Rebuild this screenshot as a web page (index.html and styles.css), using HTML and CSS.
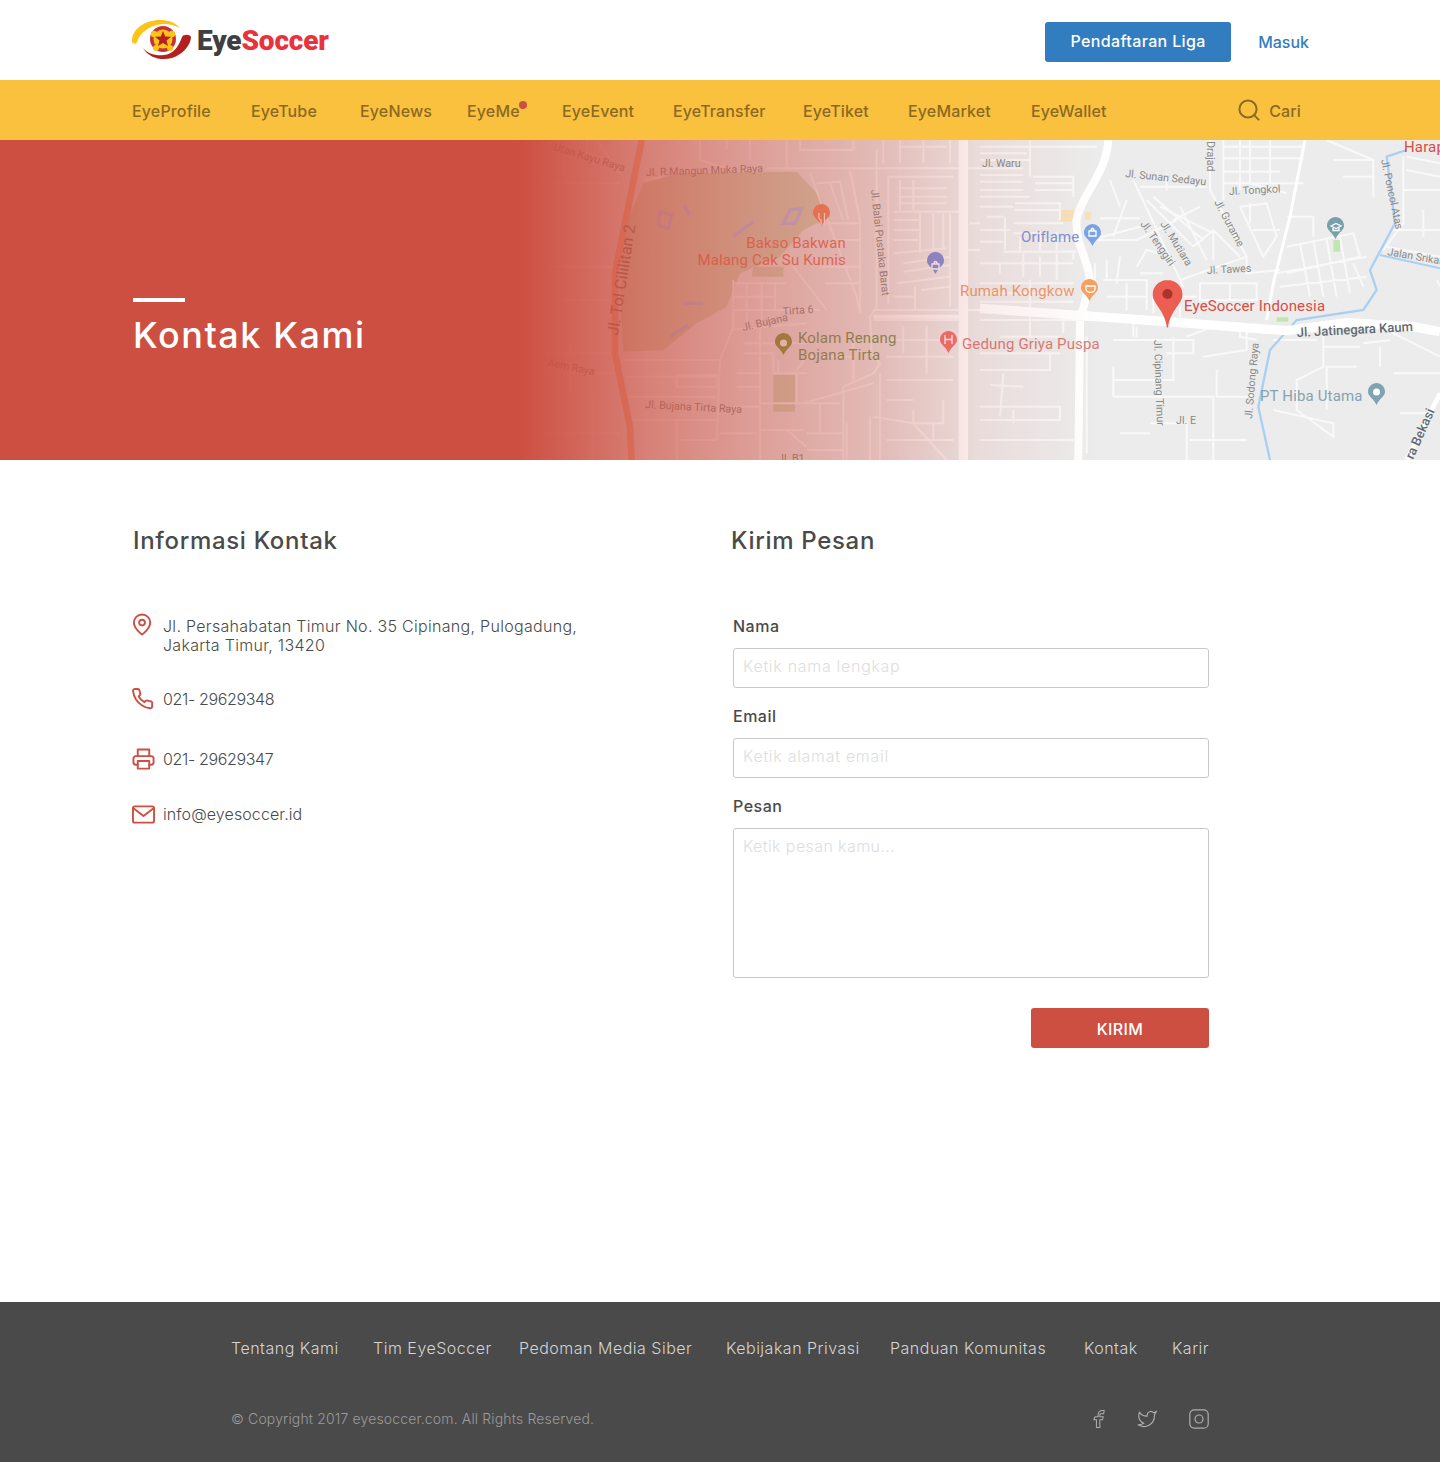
FILE: index.html

```html
<!DOCTYPE html>
<html lang="id">
<head>
    <meta charset="utf-8">
    <title>Kontak Kami - EyeSoccer</title>
    <link rel="stylesheet" href="styles.css">
</head>
<body>

<header class="topbar">
    <a class="logo" href="#">
        <svg class="logo-mark" width="62" height="40" viewBox="0 0 62 40">
            <path d="M1 21C1 9 14 0 29 0c8 0 15 2 20 8C39 3 29 3 20 7 12 11 8 16 6 22c-1 3-5 2-5-1z" fill="#fcc318"/>
            <path d="M12 28c5 6 13 8 21 7 9-1 14-7 18-18 1-3 8-3 9 0 0 8-9 18-19 21-11 3-23 0-29-10z" fill="#b3201f"/>
            <circle cx="32" cy="19" r="14" fill="#fff"/>
            <circle cx="32" cy="19" r="13" fill="#c8313a"/>
            <circle cx="32" cy="19" r="9.500" fill="#fcc318"/>
            <circle cx="23" cy="14" r="3.200" fill="#fcc318"/>
            <circle cx="41" cy="14" r="3.200" fill="#fcc318"/>
            <circle cx="25" cy="28" r="3" fill="#fcc318"/>
            <circle cx="39" cy="28" r="3" fill="#fcc318"/>
            <path d="M32 11l2.200 5.500 5.800.3-4.500 3.700 1.500 5.600-5-3.200-5 3.200 1.500-5.600-4.500-3.700 5.800-.3z" fill="#b3201f"/>
        </svg>
        <span class="logo-text">Eye<span class="logo-red">Soccer</span></span>
    </a>
    <div class="top-actions">
        <a class="btn-daftar" href="#">Pendaftaran Liga</a>
        <a class="link-masuk" href="#">Masuk</a>
    </div>
</header>

<nav class="mainnav">
    <ul class="nav-list">
        <li><a href="#">EyeProfile</a></li>
        <li><a href="#">EyeTube</a></li>
        <li><a href="#">EyeNews</a></li>
        <li><a class="has-dot" href="#">EyeMe</a></li>
        <li><a href="#">EyeEvent</a></li>
        <li><a href="#">EyeTransfer</a></li>
        <li><a href="#">EyeTiket</a></li>
        <li><a href="#">EyeMarket</a></li>
        <li><a href="#">EyeWallet</a></li>
    </ul>
    <a class="nav-search" href="#">
        <svg width="22" height="22" viewBox="0 0 22 22" fill="none" stroke="#8a6a22" stroke-width="2" stroke-linecap="round">
            <circle cx="10" cy="10" r="8.600"/>
            <path d="M16.400 16.400l4.200 4.200"/>
        </svg>
        Cari
    </a>
</nav>

<section class="hero">
    <svg class="hero-map" width="1440" height="320" viewBox="0 0 1440 320">
        <rect width="1440" height="320" fill="#ececec"/>

        <!-- left crop of the map -->
        <g transform="translate(520 0) scale(.33333)">
            <path d="M370 130L480 100 830 95 900 170 930 230 850 270 780 350 660 400 620 500 530 550 430 630 310 635 300 450 320 250z" fill="#d2d8bc"/>
            <path d="M695 410H790V380H700zM760 705H825V815H760z" fill="#d2d8bc"/>
            <path d="M640 290L700 245M490 195L510 225M420 215L455 225 445 265 415 255zM790 250L810 210 845 205 825 250zM490 490L550 490M450 590L505 555" stroke="#b6c6ef" stroke-width="10" fill="none"/>
            <g class="streets">
                <path d="M370 120L430 110M740 85H1380M870 100L1010 470 1020 520M990 90L1020 240V520M820 380L920 510M1070 30V140 500L1050 530 1055 640 1080 670 1060 700 970 740 970 960"/>
                <path d="M890 130L960 125 985 240M930 130L970 240M920 250H1020M950 300H1020M900 380H1020M915 430H1020M640 420V560L600 660 590 900M640 430H800M640 470H760M640 510H900M680 430V560M725 430V560M765 430V510M630 570L860 550M670 610H860M670 640H760M720 550V960M760 640V700H860M775 660V700M830 700V790H860M720 790H960M830 690L860 650 1000 650"/>
                <path d="M310 660H600M320 710H590M470 705H590V740H470zM320 770H590M330 840H590M470 840V960M720 870H850M850 790L1060 730M980 850V960M1050 830V960M1060 830L1180 850 1280 960M1180 810V850H1270V780M1240 850V900M800 870L860 920"/>
                <path d="M1105 110H1300M1105 110V490M1140 120V210M1180 120V210M1140 145H1280M1140 170H1280M1140 190H1280M1120 215H1320M1120 240H1200M1200 220V340M1240 220V330M1270 220V330M1290 220V500M1120 270H1200M1120 300H1195M1120 340 1280 325M1150 370 1290 350M1150 395 1290 375M1130 430 1290 410M1120 470H1180M1205 450 1290 440M1185 440V510M1060 510H1380M1060 540H1330M1380 250H1350M1340 330H1380"/>
                <path d="M800 0V80M840 0V30H1000M1000 0V30M1090 0V70M1140 0V70M1210 0V70M1290 0V70M1140 20H1280M540 0V60L620 85M620 0V30M690 0V60"/>
                <path d="M0 640H300M0 700H300M40 880H300M200 0V60M230 0L300 100M130 20V130M60 130H300M90 380H290M120 480H290M150 600V760M220 760V960M600 880H710M480 900H590M1000 600V730M1080 700V960M1100 600H1300M1100 650H1300M1150 560V640M1220 560V700M1100 720H1300M1100 900H1300M860 880H970M860 930H970M900 790V880M1100 780H1180M650 700H720M650 740H720M640 800H720"/>
            </g>
            <path class="road-big" d="M1330 0V960" stroke-width="28"/>
            <path class="road-big" d="M1060 530H1340" stroke-width="12"/>
            <path d="M365 0L285 400V640L330 860 335 960" stroke="#f5b48a" stroke-width="20" fill="none"/>
        </g>

        <!-- right crop of the map -->
        <g transform="translate(980 0) scale(.33333)">
            <path d="M240 210H285L275 245H240zM315 215H335L330 240H315z" fill="#f6e2b8"/>
            <path d="M1060 300H1080V335H1060zM890 532H925V545H890z" fill="#c2e6b0"/>
            <path class="road-big" d="M385 0C380 100 300 170 290 240 285 320 330 360 330 430L300 540 295 960" stroke-width="24"/>
            <g class="streets">
                <path d="M0 20H350M150 0V110M0 60H150M0 105H130M0 125H130M0 170H150M160 110H280V170M0 200H100M105 190H240V240M75 230V330M100 250H250M0 270H90M0 305H70M70 335H290M180 275V330M120 290V335M230 275V330M280 330V360M0 370H280M60 370V400M130 340V410M180 350V410M230 340V420"/>
                <path d="M0 430H280M0 460H280M150 420V510M370 420H500V510M440 430V510M500 430V510M0 540H460V590M150 530V590M250 540V580M60 590H240M0 640H240M0 690H210V640M30 735 130 740M70 700 60 830M0 800H240V840H0M100 810V850M0 900H280"/>
                <path d="M345 370V430M380 360V420M420 350 410 430M330 300 480 260M360 235H480M440 180 400 290M420 200 390 120M460 120 610 440M480 140H680M560 150V100M540 200 700 280M580 240 660 200M470 380 500 330 540 340M480 400H550M600 420 800 350M660 430H830V480H660zM750 430V480M600 470H650M640 320 700 270 780 350M700 360V270M780 200 860 190 890 290 850 350 780 200M810 190V250"/>
                <path d="M690 0V150L800 350V400L900 390M730 0V180M780 0V150M730 20H970M730 55H970M730 95H900M730 130H970M810 0V130M870 0V130M920 160L810 130M820 270H900M920 230H1000V290M920 320L1120 280 1140 350 920 400M960 310L990 470M1000 300L1030 470M1040 300L1070 470M1080 290 1110 460M1120 370 1150 440M890 400 1160 350M900 440 1160 410"/>
                <path d="M320 590V940M400 600H640V640H560M470 560V590M580 590V720H400M670 650 800 630V570M710 690V770H820M400 770H700V960M400 680V770M510 850H620V960M830 600L780 590V560M1030 560V680L950 720V810L1060 890 1060 850 880 810M1130 680H1040V740M1200 620V680M1040 740V810"/>
                <path d="M1040 0L1180 60 1180 170M1060 60H1180M1090 110H1180M1280 50 1380 70M1280 90 1380 110M1270 150H1380M1270 50V250L1210 330M1240 270H1380M1330 210V290M1220 320 1380 350M1370 420 1380 440M1200 560 1380 650M1150 610 1230 600"/>
                <path d="M0 40H140M0 85H130M0 150H130M165 130H280M165 150H280M105 210H240M20 230H70M100 280H170M185 300H280M0 485H280M380 470H500M520 460V520M560 440V530M600 500V545M350 300H470M470 300L590 240M500 180L640 320M520 170L670 300M600 200L680 360M880 600H1010M1030 620H1140M1240 700H1380M1260 820H1340M420 880H510M630 900H800M620 590L700 560"/>
            </g>
            <path d="M1280 30L1220 50 1245 250 1170 390 1190 450 1150 510 950 540 870 630 835 800 870 960" stroke="#a9d0f3" stroke-width="7" fill="none"/>
            <path d="M1200 345L1380 385" stroke="#a9d0f3" stroke-width="6"/>
            <path class="road-big" d="M0 505L560 545 920 572 1100 548 1300 560 1380 575" stroke-width="28"/>
            <path class="road-big" d="M975 0L930 230 880 430 860 540" stroke-width="9"/>
            <path class="road-big" d="M1380 760L1280 960" stroke-width="14"/>
        </g>

        <!-- street names -->
        <g class="street-name">
            <text class="nm-big" transform="translate(618 196) rotate(-81)">Jl. Tol Cililitan 2</text>
            <text transform="translate(646 36) rotate(-2)">Jl. R.Mangun Muka Raya</text>
            <text transform="translate(553 10) rotate(17)">Utan Kayu Raya</text>
            <text transform="translate(547 226) rotate(11)">Aem Raya</text>
            <text transform="translate(871 50) rotate(84)">Jl. Balai Pustaka Barat</text>
            <text transform="translate(743 191) rotate(-13)">Jl. Bujana</text>
            <text transform="translate(783 175) rotate(-4)">Tirta 6</text>
            <text transform="translate(645 268) rotate(3)">Jl. Bujana Tirta Raya</text>
            <text x="778" y="322">Jl. B1</text>
            <text x="982" y="27">Jl. Waru</text>
            <text transform="translate(1125 37) rotate(6)">Jl. Sunan Sedayu</text>
            <text transform="translate(1207 1) rotate(90)">Drajad</text>
            <text transform="translate(1229 55) rotate(-3)">Jl. Tongkol</text>
            <text transform="translate(1214 62) rotate(62)">Jl. Gurame</text>
            <text transform="translate(1207 134) rotate(-3)">Jl. Tawes</text>
            <text transform="translate(1160 84) rotate(58)">Jl. Mutiara</text>
            <text transform="translate(1140 84) rotate(55)">Jl. Tenggiri</text>
            <text transform="translate(1381 20) rotate(78)">Jl. Poncol Atas</text>
            <text transform="translate(1387 115) rotate(10)">Jalan Srikan</text>
            <text transform="translate(1154 200) rotate(88)">Jl. Cipinang Timur</text>
            <text transform="translate(1252 279) rotate(-85)">Jl. Sodong Raya</text>
            <text x="1176" y="284">Jl. E</text>
            <text class="nm-road" transform="translate(1297 197) rotate(-3)">Jl. Jatinegara Kaum</text>
            <text class="nm-side" transform="translate(1413 320) rotate(-66)">ra Bekasi</text>
        </g>

        <!-- place names -->
        <g class="place-name">
            <text class="pl-red" text-anchor="end" x="846" y="108">Bakso Bakwan</text>
            <text class="pl-red" text-anchor="end" x="846" y="125">Malang Cak Su Kumis</text>
            <text class="pl-blue" x="1021" y="102">Oriflame</text>
            <text class="pl-orange" x="960" y="156">Rumah Kongkow</text>
            <text class="pl-main" x="1184" y="171">EyeSoccer Indonesia</text>
            <text class="pl-rose" x="962" y="209">Gedung Griya Puspa</text>
            <text class="pl-green" x="798" y="203">Kolam Renang</text>
            <text class="pl-green" x="798" y="220">Bojana Tirta</text>
            <text class="pl-teal" x="1260" y="261">PT Hiba Utama</text>
            <text class="pl-main" x="1404" y="12">Harap</text>
        </g>

        <!-- pins -->
        <g>
            <path d="M0 9C0 3.500 4 0 8.500 0S17 3.500 17 9C17 13 12 15 8.500 22 5 15 0 13 0 9z" fill="#f2885e" transform="translate(813 64)"/>
            <path d="M0 9C0 3.500 4 0 8.500 0S17 3.500 17 9C17 13 12 15 8.500 22 5 15 0 13 0 9z" fill="#7d8fdc" transform="translate(927 112)"/>
            <path d="M0 9C0 3.500 4 0 8.500 0S17 3.500 17 9C17 13 12 15 8.500 22 5 15 0 13 0 9z" fill="#7ba3e8" transform="translate(1084 84)"/>
            <path d="M0 9C0 3.500 4 0 8.500 0S17 3.500 17 9C17 13 12 15 8.500 22 5 15 0 13 0 9z" fill="#f7a15f" transform="translate(1081 139)"/>
            <path d="M0 9C0 3.500 4 0 8.500 0S17 3.500 17 9C17 13 12 15 8.500 22 5 15 0 13 0 9z" fill="#78a0ac" transform="translate(1327 77)"/>
            <path d="M0 9C0 3.500 4 0 8.500 0S17 3.500 17 9C17 13 12 15 8.500 22 5 15 0 13 0 9z" fill="#7f9a3c" transform="translate(775 193)"/>
            <path d="M0 9C0 3.500 4 0 8.500 0S17 3.500 17 9C17 13 12 15 8.500 22 5 15 0 13 0 9z" fill="#f0706c" transform="translate(940 191)"/>
            <path d="M0 9C0 3.500 4 0 8.500 0S17 3.500 17 9C17 13 12 15 8.500 22 5 15 0 13 0 9z" fill="#7fa3b3" transform="translate(1368 243)"/>
            <path d="M819 73v5a2.500 2.500 0 0 0 2 2v5M824.500 73v12M932 124h7v5h-7zM934 124a1.500 2.500 0 0 1 3 0M1089 91h7v5h-7zM1091 91a1.500 2.500 0 0 1 3 0M1086 146h9v3a4 3 0 0 1-9 0zM1331 86l5-2.500 5 2.500-5 2.500zM1333 88v2.500h6V88M945 195v9M952 195v9M945 199.500h7" stroke="#fff" stroke-width="1.300" fill="none"/>
            <circle cx="783.500" cy="203" r="3.500" fill="#fff"/>
            <circle cx="1376.500" cy="252" r="3.500" fill="#fff"/>
            <path d="M1167.500 140c-8.500 0-14.800 6.500-14.800 14.500 0 9.500 12 15.500 14.200 33h1.200c2.200-17.500 14.400-23.500 14.400-33 0-8-6.400-14.500-15-14.500z" fill="#ec5d52"/>
            <circle cx="1167.500" cy="154" r="5" fill="#a8342c"/>
        </g>
    </svg>
    <div class="hero-fade"></div>
    <div class="hero-text">
        <span class="hero-bar"></span>
        <h1>Kontak Kami</h1>
    </div>
</section>

<main class="kontak">
    <section class="kontak-info">
        <h2>Informasi Kontak</h2>
        <ul class="info-list">
            <li class="info-first">
                <svg class="ic" viewBox="0 0 24 24"><g transform="translate(-1.500 0)"><path d="M20.500 10.500c0 6.500-8.500 12.500-8.500 12.500s-8.500-6-8.500-12.500a8.500 8.500 0 0 1 17 0z"/><circle cx="12" cy="10.500" r="3"/></g></svg>
                <p>Jl. Persahabatan Timur No. 35 Cipinang, Pulogadung,<br>Jakarta Timur, 13420</p>
            </li>
            <li>
                <svg class="ic" viewBox="0 0 24 24"><path d="M23 18.500v2.700a2 2 0 0 1-2.200 2A20 20 0 0 1 12.200 20 19.500 19.500 0 0 1 6.200 14 20 20 0 0 1 3.100 5.300 2 2 0 0 1 5.100 3h2.800a2 2 0 0 1 2 1.700c.1 1 .4 1.900.7 2.800a2 2 0 0 1-.5 2.100L9 10.800a16 16 0 0 0 6 6l1.200-1.200a2 2 0 0 1 2.100-.5c.9.300 1.800.6 2.800.7a2 2 0 0 1 1.900 2.700z" transform="translate(-2 -1.500)"/></svg>
                <p class="info-num">021- 29629348</p>
            </li>
            <li>
                <svg class="ic" viewBox="0 0 24 24"><path d="M6 9V2h12v7M6 18H4a2.500 2.500 0 0 1-2.500-2.500v-4A2.500 2.500 0 0 1 4 9h16a2.500 2.500 0 0 1 2.500 2.500v4A2.500 2.500 0 0 1 20 18h-2"/><path d="M6 14h12v8H6z"/></svg>
                <p class="info-num">021- 29629347</p>
            </li>
            <li>
                <svg class="ic" viewBox="0 0 24 24"><rect x="1" y="4" width="22" height="17" rx="2"/><path d="M1.500 6L12 14 22.500 6"/></svg>
                <p class="info-mail">info@eyesoccer.id</p>
            </li>
        </ul>
    </section>

    <section class="kontak-form">
        <h2>Kirim Pesan</h2>
        <form class="pesan-form">
            <label for="nama">Nama</label>
            <input type="text" id="nama" placeholder="Ketik nama lengkap">
            <label for="email">Email</label>
            <input type="text" id="email" placeholder="Ketik alamat email">
            <label for="pesan">Pesan</label>
            <textarea id="pesan" placeholder="Ketik pesan kamu..."></textarea>
            <button type="button">KIRIM</button>
        </form>
    </section>
</main>

<footer class="footer">
    <ul class="footer-links">
        <li><a href="#">Tentang Kami</a></li>
        <li><a href="#">Tim EyeSoccer</a></li>
        <li><a href="#">Pedoman Media Siber</a></li>
        <li><a href="#">Kebijakan Privasi</a></li>
        <li><a href="#">Panduan Komunitas</a></li>
        <li><a href="#">Kontak</a></li>
        <li><a href="#">Karir</a></li>
    </ul>
    <div class="footer-bottom">
        <p class="copyright">© Copyright 2017 eyesoccer.com. All Rights Reserved.</p>
        <div class="social">
            <svg class="soc soc-fb" viewBox="0 0 14 22"><path d="M13 1h-2.500A4.500 4.500 0 0 0 6 5.500V8.500H2.500C1.500 10 1 11 1 12H4v9h4v-9h3l1-3.500H8V6a1 1 0 0 1 1-1h3.500z"/></svg>
            <svg class="soc soc-tw" viewBox="0 0 24 24"><path d="M23 3a10.900 10.900 0 0 1-3 1.530 4.480 4.480 0 0 0-7.860 3v1A10.660 10.660 0 0 1 3 4s-4 9 5 13a11.640 11.640 0 0 1-7 2c9 5 20 0 20-11.500a4.500 4.500 0 0 0-.08-.83A7.720 7.720 0 0 0 23 3z"/></svg>
            <svg class="soc soc-ig" viewBox="0 0 20 20"><rect x=".8" y=".8" width="18.400" height="18.400" rx="4.500"/><circle cx="10" cy="10" r="4"/></svg>
        </div>
    </div>
</footer>

</body>
</html>
```

FILE: styles.css

```css
* {
    box-sizing: border-box;
}

body {
    margin: 0;
    font-family: "Inter", "Noto Sans", sans-serif;
    color: #4a4a4a;
    background: #fff;
}

a {
    text-decoration: none;
    color: inherit;
}

ul {
    list-style: none;
    margin: 0;
    padding: 0;
}

/* header */
.topbar {
    height: 80px;
    padding: 0 131px;
    display: flex;
    align-items: center;
    justify-content: space-between;
}

.logo {
    display: flex;
    align-items: center;
    gap: 4px;
}

.logo-text {
    font-family: "Roboto", sans-serif;
    font-weight: 900;
    font-size: 28px;
    letter-spacing: -0.15px;
    color: #3f3f41;
}

.logo-red {
    color: #e8323c;
}

.top-actions {
    display: flex;
    align-items: center;
    gap: 27px;
    padding-top: 4px;
}

.btn-daftar {
    width: 186px;
    height: 40px;
    line-height: 38px;
    text-align: center;
    background: #327dc0;
    border-radius: 3px;
    color: #fff;
    font-size: 16px;
    font-weight: 500;
    letter-spacing: 0.35px;
}

.link-masuk {
    color: #327dc0;
    font-size: 16px;
    font-weight: 500;
}

/* yellow nav */
.mainnav {
    height: 60px;
    background: #fac13f;
    padding: 2px 139px 0 132px;
    display: flex;
    align-items: center;
    justify-content: space-between;
    color: #8a6a22;
    font-size: 16px;
    font-weight: 500;
    letter-spacing: 0.15px;
}

.nav-list {
    display: grid;
    grid-template-columns: 119px 109px 107px 95px 111px 130px 105px 123px auto;
}

.has-dot {
    position: relative;
}

.has-dot::after {
    content: "";
    position: absolute;
    right: -7px;
    top: 0;
    width: 8px;
    height: 8px;
    border-radius: 50%;
    background: #cd4f41;
}

.nav-search {
    display: flex;
    align-items: center;
    gap: 9px;
}

.nav-search svg {
    margin-top: -2px;
}

/* hero with the map behind it */
.hero {
    position: relative;
    height: 320px;
    overflow: hidden;
    background: #cd4f41;
}

.hero-map {
    position: absolute;
    left: 0;
    top: 0;
}

.hero-fade {
    position: absolute;
    left: 0;
    top: 0;
    width: 100%;
    height: 100%;
    background: linear-gradient(to right,
        #cd4f41 36%,
        rgba(205, 79, 65, 0.9) 38.9%,
        rgba(205, 79, 65, 0.68) 45.1%,
        rgba(205, 79, 65, 0.5) 52.1%,
        rgba(205, 79, 65, 0.3) 61.5%,
        rgba(205, 79, 65, 0.1) 68%,
        rgba(205, 79, 65, 0) 76.4%);
}

.hero-text {
    position: relative;
    padding: 158px 0 0 133px;
}

.hero-bar {
    display: block;
    width: 52px;
    height: 4px;
    background: #fff;
}

.hero h1 {
    margin: 11px 0 0;
    color: #fff;
    font-size: 36px;
    line-height: 44px;
    font-weight: 500;
    letter-spacing: 1.55px;
}

.streets path {
    stroke: #f9f9f9;
    stroke-width: 6;
    fill: none;
}

.road-big {
    stroke: #fff;
    fill: none;
}

.street-name text {
    font-family: "Roboto", sans-serif;
    font-size: 10.700px;
    fill: #8a8a8a;
}

.street-name .nm-big {
    font-size: 16px;
    fill: #7d6c5c;
}

.street-name .nm-road {
    font-size: 13px;
    font-weight: 500;
    fill: #5f6b73;
}

.street-name .nm-side {
    font-size: 13px;
    font-weight: 500;
    fill: #5f6b73;
}

.place-name text {
    font-family: "Roboto", sans-serif;
    font-size: 15px;
    letter-spacing: 0.15px;
    opacity: 0.9;
}

.pl-red { fill: #e8684f; }
.pl-blue { fill: #7086d8; }
.pl-orange { fill: #f2905a; }
.pl-main { fill: #d93a32; }
.pl-rose { fill: #d96f69; }
.pl-green { fill: #5f8f45; }
.pl-teal { fill: #7a9cab; }

/* content */
.kontak {
    height: 842px;
    padding: 63px 231px 0 133px;
    display: flex;
}

.kontak-info {
    width: 600px;
}

.kontak-form {
    flex: 1;
}

.kontak h2 {
    margin: 0;
    font-size: 24px;
    line-height: 36px;
    font-weight: 500;
    letter-spacing: 0.68px;
    color: #4a4a4a;
}

.info-list {
    margin: 53px 0 0 -1px;
    display: grid;
    grid-template-rows: 75px 60px 55px auto;
    font-size: 16px;
    font-weight: 300;
    letter-spacing: 0.3px;
}

.info-list li {
    display: flex;
    align-items: center;
    align-self: start;
    height: 24px;
}

.info-list .info-first {
    height: auto;
    align-items: flex-start;
}

.info-first p {
    padding-top: 5px;
}

.info-list p {
    margin: 0;
    line-height: 19px;
}

.info-list .info-num {
    letter-spacing: -0.35px;
}

.info-list .info-mail {
    letter-spacing: 0.1px;
}

.ic {
    width: 23px;
    height: 24px;
    margin-right: 8px;
    flex: none;
    fill: none;
    stroke: #cd4f41;
    stroke-width: 2;
    stroke-linecap: round;
    stroke-linejoin: round;
}

.kontak-form h2 {
    margin-left: -2px;
}

.pesan-form {
    margin-top: 58px;
    display: flex;
    flex-direction: column;
    width: 476px;
}

.pesan-form label {
    font-size: 16px;
    line-height: 19px;
    font-weight: 500;
    letter-spacing: 0.5px;
    margin-bottom: 12px;
}

.pesan-form input,
.pesan-form textarea {
    display: block;
    width: 100%;
    height: 40px;
    margin-bottom: 19px;
    padding: 0 9px 4px;
    border: 1px solid #c9c9c9;
    border-radius: 3px;
    font-family: inherit;
    font-size: 16px;
    font-weight: 300;
    letter-spacing: 0.7px;
    outline: none;
    resize: none;
}

.pesan-form textarea {
    height: 150px;
    margin-bottom: 30px;
    padding-top: 7px;
    letter-spacing: 0.4px;
}

.pesan-form ::placeholder {
    color: #dedede;
    opacity: 1;
}

.pesan-form button {
    align-self: flex-end;
    width: 178px;
    height: 40px;
    padding-top: 3px;
    border: 0;
    border-radius: 3px;
    background: #cd4f41;
    color: #fff;
    font-family: inherit;
    font-size: 16px;
    font-weight: 500;
    letter-spacing: 0.4px;
}

/* footer */
.footer {
    height: 160px;
    padding: 36px 231px 0;
    background: #4a4a4a;
}

.footer-links {
    display: grid;
    grid-template-columns: 142px 146px 207px 164px 194px 88px auto;
    color: #d4d4d4;
    font-size: 16px;
    font-weight: 300;
    line-height: 20px;
    letter-spacing: 0.5px;
}

.footer-bottom {
    margin-top: 50px;
    display: flex;
    justify-content: space-between;
    align-items: center;
}

.copyright {
    margin: 0;
    color: #9b9b9b;
    font-size: 14px;
    font-weight: 300;
    letter-spacing: 0.15px;
}

.social {
    display: flex;
    align-items: center;
    margin-top: 1px;
}

.soc {
    fill: none;
    stroke: #adadad;
    stroke-width: 1.200;
}

.soc-fb {
    width: 12px;
    height: 20px;
    margin-right: 32px;
}

.soc-tw {
    width: 20px;
    height: 20px;
    margin-right: 32px;
    stroke-width: 1.400;
}

.soc-ig {
    width: 20px;
    height: 20px;
}
```
